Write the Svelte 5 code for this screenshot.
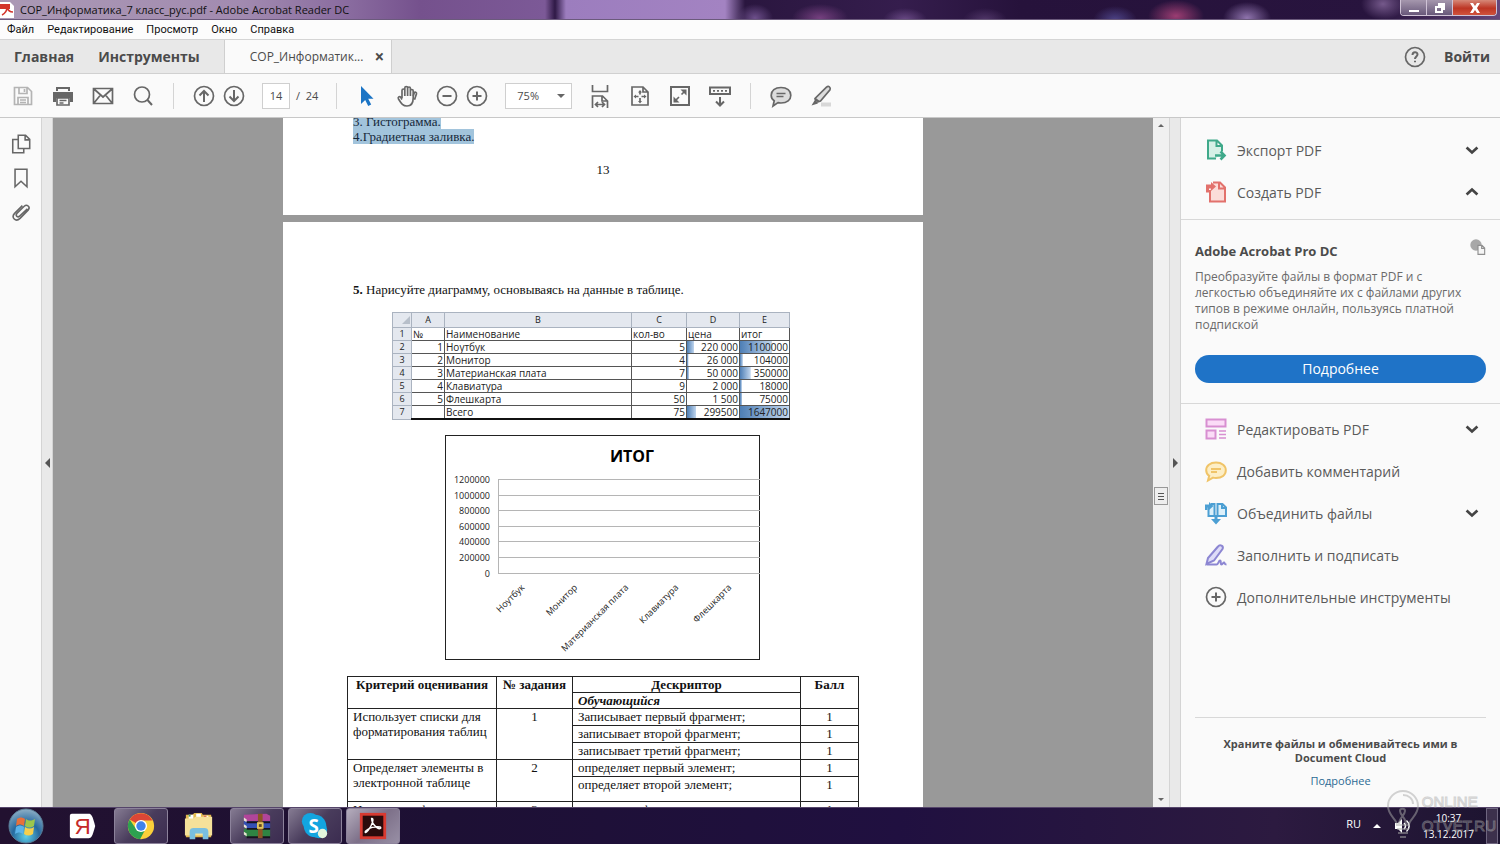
<script>
  const menu = ['Файл', 'Редактирование', 'Просмотр', 'Окно', 'Справка'];

  let page = $state('14');
  let zoom = $state('75%');

  const topTools = [
    { icon: 'export', label: 'Экспорт PDF', arrow: 'down' },
    { icon: 'create', label: 'Создать PDF', arrow: 'up' }
  ];

  const tools = [
    { icon: 'edit', label: 'Редактировать PDF', arrow: 'down' },
    { icon: 'note', label: 'Добавить комментарий' },
    { icon: 'combine', label: 'Объединить файлы', arrow: 'down' },
    { icon: 'sign', label: 'Заполнить и подписать' },
    { icon: 'more', label: 'Дополнительные инструменты' }
  ];

  // price and total cells carry a data bar, width in percent
  const sheet = [
    { n: '1', name: 'Ноутбук', qty: '5', price: '220 000', total: '1100000', bar: 14, totalBar: 66 },
    { n: '2', name: 'Монитор', qty: '4', price: '26 000', total: '104000', bar: 3, totalBar: 6 },
    { n: '3', name: 'Материанская плата', qty: '7', price: '50 000', total: '350000', bar: 4, totalBar: 22 },
    { n: '4', name: 'Клавиатура', qty: '9', price: '2 000', total: '18000', bar: 0, totalBar: 4 },
    { n: '5', name: 'Флешкарта', qty: '50', price: '1 500', total: '75000', bar: 0, totalBar: 5 },
    { n: '', name: 'Всего', qty: '75', price: '299500', total: '1647000', bar: 18, totalBar: 100 }
  ];

  const axis = ['1200000', '1000000', '800000', '600000', '400000', '200000', '0'];
  const categories = [
    { x: 80, name: 'Ноутбук' },
    { x: 133, name: 'Монитор' },
    { x: 184, name: 'Материанская плата' },
    { x: 234, name: 'Клавиатура' },
    { x: 287, name: 'Флешкарта' }
  ];

  const rubric = [
    { title: 'Использует списки для форматирования таблиц', n: 1, items: ['Записывает первый фрагмент;', 'записывает второй фрагмент;', 'записывает третий фрагмент;'] },
    { title: 'Определяет элементы в электронной таблице', n: 2, items: ['определяет первый элемент;', 'определяет второй элемент;'] },
    { title: 'Использует формулы', n: 3, items: ['использует формулы;'] }
  ];

  const apps = [
    { name: 'yandex', label: 'Яндекс', open: false },
    { name: 'chrome', label: 'Google Chrome', open: true },
    { name: 'folder', label: 'Проводник', open: false },
    { name: 'winrar', label: 'WinRAR', open: true },
    { name: 'skype', label: 'Skype', open: true },
    { name: 'acrobat', label: 'Adobe Acrobat Reader DC', open: true, active: true }
  ];
</script>

{#snippet icon(name)}
  <svg class="icon" viewBox="0 0 24 24" aria-hidden="true">
    {#if name === 'save'}
      <path class="pale" d="M3.500 3.500h13l4 4v13h-17zM8 3.500v6h8v-6M13.500 5v3M7 20.500v-7h10v7M9 16h6M9 18.500h6" />
    {:else if name === 'print'}
      <path class="solid" d="M5 3h14v4h-14zM2 8h20v10h-3v-4h-14v4h-3z" />
      <path d="M6 14h12v7h-12zM8.500 16.500h7M8.500 19h4" />
      <path class="white" d="M7 5h10v3h-10z" />
    {:else if name === 'mail'}
      <path d="M2.500 4.500h19v15h-19zM3 5l9 8 9-8M3 19l6.500-8M21 19l-6.500-8" />
    {:else if name === 'search'}
      <circle cx="11" cy="10.500" r="7.500" /><path class="thick" d="M16.500 16l4.500 5" />
    {:else if name === 'up'}
      <circle cx="12" cy="12" r="9.500" /><path class="thick" d="M12 18V7M7.500 11.500L12 7l4.500 4.500" />
    {:else if name === 'down'}
      <circle cx="12" cy="12" r="9.500" /><path class="thick" d="M12 6v11M7.500 12.500L12 17l4.500-4.500" />
    {:else if name === 'cursor'}
      <path class="blue" d="M6 2v18l4.200-4 3 6 3-1.500-3-5.700h5.300z" />
    {:else if name === 'hand'}
      <path d="M7 14V6.500c0-2 2.800-2 2.800 0V12V4c0-2 2.800-2 2.800 0v8V4.500c0-2 2.800-2 2.800 0V12V7c0-2 2.800-2 2.800 0v7c0 5-2 8-6.200 8-4 0-5.500-2-8.500-7-1-2 1-3.200 2.300-1.700L7 15.500" />
      <path d="M18.200 12l1-3c.7-1.500 2.600-.8 2.300.8l-2 6" />
    {:else if name === 'minus'}
      <circle cx="12" cy="12" r="9.500" /><path class="thick" d="M7.500 12h9" />
    {:else if name === 'plus' || name === 'more'}
      <circle cx="12" cy="12" r="9.500" /><path class="thick" d="M7.500 12h9M12 7.500v9" />
    {:else if name === 'width'}
      <path d="M4.500 1v6.500h15V1M4.500 24V12h10l5 5v7M14 12.500V17h5" /><path d="M8 20.500h8M10 18l-2.500 2.500L10 23M14 18l2.500 2.500L14 23" />
    {:else if name === 'fit'}
      <path d="M4 3h11l5 5v13H4zM15 3v5h5" /><path d="M12 8v2.500M12 14v3M7.500 12.500h3M13.500 12.500h3" />
      <path class="solid" d="M12 6l2 2.500h-4zM12 19.500l2-2.500h-4zM5.500 12.500l2.500-2v4zM18.500 12.500l-2.500-2v4z" />
    {:else if name === 'full'}
      <path class="thick" d="M3 3h18v18H3z" /><path d="M7 17l4-4M13.500 10.500l4-4" />
      <path class="solid" d="M18.500 5.500v6l-6-6zM5.500 18.500v-6l6 6z" />
    {:else if name === 'keys'}
      <path class="thick" d="M2 3.500h20v6.500H2zM12 13v8M8 17.500l4 4 4-4" /><path d="M5 6.800h2M9 6.800h2M13 6.800h2M17 6.800h2" />
    {:else if name === 'comment'}
      <path class="tint" d="M12 3.500c6 0 9.800 3.200 9.800 7.800S18 19 12 19c-1 0-2 0-3-.4L4 22l1.200-5.200C3 15.500 2.200 13.500 2.200 11.300 2.200 6.700 6 3.500 12 3.500z" />
      <path d="M7.500 9.500h9M7.500 12.500h7" />
    {:else if name === 'marker'}
      <path class="under" d="M12 20.500h10" />
      <path class="tint" d="M17.500 3.200c2-1.700 4.500 0 3.500 2.500L11.500 17l-4.500 1.500-1-4zM6 14.500L10.500 18" /><path class="solid" d="M5.500 16.500l3.500 3-6.500 2z" />
    {:else if name === 'help'}
      <circle cx="12" cy="12" r="9.500" /><path class="thick" d="M9.500 10c0-3.500 5-3.500 5-.5 0 2-2.500 2-2.500 4.500M12 15.800v1.500" />
    {:else if name === 'pages'}
      <path d="M9 2.500h8l4.500 4.500v10H9zM16.500 3v4.500h5M9 7H3v14.500h12V17" />
    {:else if name === 'bookmark'}
      <path d="M5.500 2.500h13v19l-6.500-6-6.500 6z" />
    {:else if name === 'clip'}
      <path d="M19 8.500l-8.500 8c-2 2-5-.5-3-2.800l8-8c3-2.700 7 .8 4.500 4L11 19c-5 4.500-10-.8-6-5.500l8.500-8.500" />
    {:else if name === 'export'}
      <path class="green" d="M12 20.500H4V2.500h9l5 5v6M12.500 3v5h5" /><path class="green thick" d="M11 17.500h9M16.500 13.500l4 4-4 4" />
    {:else if name === 'create'}
      <path class="red" d="M6 10v11.500h15V7.500l-5-5H9M15 3v5.500h6" /><path class="redfill" d="M2 4.500h5V2l5 4.500L7 11V8.500H5v4H2z" />
    {:else if name === 'edit'}
      <path class="pink" d="M2.500 2.500h19v7h-19zM2.500 13.500h9v8h-9z" /><path class="pinkline" d="M15 14h7M15 17.500h7M15 21h7" />
    {:else if name === 'note'}
      <path class="yellow" d="M12 3.500c6 0 9.800 3.200 9.800 7.800S18 19 12 19c-1 0-2 0-3-.4L4 21.500l1.200-4.700C3 15.500 2.200 13.500 2.200 11.300 2.200 6.700 6 3.500 12 3.500zM7 10h10M7 13h6" />
    {:else if name === 'combine'}
      <path class="sky" d="M4.500 6v9h6V3H7M13.500 3h5l3.500 3.500V15h-8.500zM18 3v4h4" />
      <path class="skyfill" d="M1 3.500h4V1l4.500 4L5 9V6.500H3.500V9H1zM10.500 14h3v4H17l-5 5.500L7 18h3.500z" />
    {:else if name === 'sign'}
      <path class="violet" d="M14 3.500c2-2.500 6-.5 4.500 2.500L10 17.500 2.500 21l1.500-6z" />
      <path class="violet open-line" d="M2.500 21.500h10c2 0 2-4 3.500-4s0 4 1.500 4 1.500-2 2.500-2 0 2 2.500 2" />
    {:else if name === 'cloudpage'}
      <circle class="cloud" cx="9" cy="9" r="8.500" />
      <path class="sheet" d="M12 9.500h6l4 4V23H12zM17.500 10v4H22" />
    {:else if name === 'chevdown'}
      <path class="chev" d="M5.500 9l6.500 6 6.500-6" />
    {:else if name === 'chevup'}
      <path class="chev" d="M5.500 15l6.500-6 6.500 6" />
    {/if}
  </svg>
{/snippet}

{#snippet tool(t)}
  <button class="tool">
    {@render icon(t.icon)}
    <span>{t.label}</span>
    {#if t.arrow}{@render icon('chev' + t.arrow)}{/if}
  </button>
{/snippet}

{#snippet appIcon(name)}
  <svg class="app-icon" viewBox="0 0 32 32" aria-hidden="true">
    {#if name === 'yandex'}
      <path fill="#fff" d="M4 3h18c3 0 4 2 7 13-3 11-4 13-7 13H4c-1 0-2-1-2-2V5c0-1 1-2 2-2z" />
      <text class="ya" x="7" y="25">Я</text>
    {:else if name === 'chrome'}
      <circle cx="16" cy="16" r="14" fill="#fbd03a" />
      <path fill="#dc4636" d="M16 16L4 9a14 14 0 0 1 24.300 1H16z" />
      <path fill="#2da150" d="M3.900 9A14 14 0 0 0 15 30l6-11-5-3-6 2z" />
      <circle cx="16" cy="16" r="6.500" fill="#fff" /><circle cx="16" cy="16" r="5" fill="#3f83ea" />
    {:else if name === 'folder'}
      <path fill="#e2b94e" d="M2 4h7l2-2h8l1 2h9v24H2z" />
      <path fill="#fff" d="M5 4h5v5H5zM13 3h5v5h-5zM21 5h5v5h-5z" />
      <path fill="#3f9c62" d="M5 4h2v2H5z" /><path fill="#d65142" d="M21 5h3v2h-3z" />
      <path fill="#f5e19a" d="M1 8h9l2-2h18v20H1z" />
      <path fill="#79bfe0" d="M6 30v-8c0-3 2-4 4-4h12c2 0 4 1 4 4v8h-6v-6h-8v6z" />
    {:else if name === 'winrar'}
      <path fill="#b1459a" d="M2 4l24-1 4 2v7H5L2 10z" /><path fill="#3450b4" d="M2 11h28v8H5l-3-3z" /><path fill="#2f8443" d="M2 19h28v9H5l-3-3z" />
      <path fill="#e8e3d4" d="M2 7l3 2v3l-3-2zM2 14l3 2v3l-3-2zM2 22l3 2v3l-3-2z" />
      <path fill="#18131f" d="M5 11h25v2H5zM5 18h25v2H5zM5 27h25v2H5z" />
      <path fill="#8b5525" d="M17 3h5v26h-5z" /><path fill="#e0c45c" d="M16 12h7v7h-7z" /><path fill="#5f4422" d="M18 14h3v3h-3z" />
    {:else if name === 'skype'}
      <circle cx="11" cy="11" r="9" fill="#12a5e0" /><circle cx="20" cy="20" r="9" fill="#12a5e0" /><circle cx="16" cy="16" r="12" fill="#12a5e0" />
      <text class="sk" x="9" y="23">S</text>
      <circle cx="24" cy="24" r="5" fill="#e4f6dd" />
    {:else if name === 'acrobat'}
      <path fill="#d83a31" d="M2 2h28v28H2z" /><path fill="#2b0b0c" d="M5 5h22v22H5z" />
      <path class="swirl" d="M14.500 8c3-1 1 7-4 13-2 3-4 2-2 0 3-3 10-5 15-4 2 1 0 3-3 1-4-3-6-7-6-10z" />
    {/if}
  </svg>
{/snippet}

<div class="window">
  <header class="titlebar">
    <svg class="pdf" viewBox="0 0 14 16" aria-hidden="true">
      <path fill="#fff" d="M0 0h10l4 4v12H0z" /><path fill="#d3342b" d="M0 2h10v5H0z" />
      <path fill="none" stroke="#d3342b" stroke-width="1.500" d="M2 13c4-2 5-6 5-8 1 4 3 5 6 5" />
    </svg>
    <h1>СОР_Информатика_7 класс_рус.pdf - Adobe Acrobat Reader DC</h1>
    <div class="controls">
      <button aria-label="Свернуть"><svg viewBox="0 0 12 10"><path d="M1 7h10v2H1z" /></svg></button>
      <button aria-label="Восстановить"><svg viewBox="0 0 12 10"><path fill-rule="evenodd" d="M4 0h7v7H9v3H1V3h3zM3 5v3h4V5z" /></svg></button>
      <button class="close" aria-label="Закрыть"><svg viewBox="0 0 12 10"><path d="M1 0h3l2 3 2-3h3L8 5l3 5H8L6 7l-2 3H1l3-5z" /></svg></button>
    </div>
  </header>

  <nav class="menubar">
    {#each menu as item}
      <button>{item}</button>
    {/each}
  </nav>

  <div class="tabs">
    <button class="home">Главная</button>
    <button class="instruments">Инструменты</button>
    <div class="tab">
      <button>СОР_Информатик...</button>
      <button class="tab-close" aria-label="Закрыть вкладку">×</button>
    </div>
    <div class="account">
      <button class="tb" aria-label="Справка">{@render icon('help')}</button>
      <button>Войти</button>
    </div>
  </div>

  <div class="toolbar">
    <div class="group wide">
      <button class="tb" aria-label="Сохранить">{@render icon('save')}</button>
      <button class="tb" aria-label="Печать">{@render icon('print')}</button>
      <button class="tb" aria-label="Почта">{@render icon('mail')}</button>
      <button class="tb" aria-label="Поиск">{@render icon('search')}</button>
    </div>
    <i class="sep"></i>
    <div class="group">
      <button class="tb" aria-label="Предыдущая страница">{@render icon('up')}</button>
      <button class="tb" aria-label="Следующая страница">{@render icon('down')}</button>
    </div>
    <label class="pager"><input bind:value={page} aria-label="Страница" /> <span>/&nbsp; 24</span></label>
    <i class="sep"></i>
    <div class="group wide">
      <button class="tb" aria-label="Выделение">{@render icon('cursor')}</button>
      <button class="tb" aria-label="Рука">{@render icon('hand')}</button>
      <div class="group">
        <button class="tb" aria-label="Уменьшить">{@render icon('minus')}</button>
        <button class="tb" aria-label="Увеличить">{@render icon('plus')}</button>
      </div>
    </div>
    <div class="zoom">
      <select bind:value={zoom} aria-label="Масштаб">
        <option>50%</option>
        <option>75%</option>
        <option>100%</option>
      </select>
      <i class="tri down"></i>
    </div>
    <div class="group wide">
      <button class="tb" aria-label="По ширине">{@render icon('width')}</button>
      <button class="tb" aria-label="Страница целиком">{@render icon('fit')}</button>
      <button class="tb" aria-label="Полный экран">{@render icon('full')}</button>
      <button class="tb" aria-label="Панель">{@render icon('keys')}</button>
    </div>
    <i class="sep"></i>
    <div class="group wide">
      <button class="tb" aria-label="Комментарий">{@render icon('comment')}</button>
      <button class="tb" aria-label="Маркер">{@render icon('marker')}</button>
    </div>
  </div>

  <div class="body">
    <aside class="rail">
      <button class="tb" aria-label="Миниатюры">{@render icon('pages')}</button>
      <button class="tb" aria-label="Закладки">{@render icon('bookmark')}</button>
      <button class="tb" aria-label="Вложения">{@render icon('clip')}</button>
    </aside>
    <button class="strip" aria-label="Левая панель"><i class="tri left"></i></button>

    <main class="doc">
      <section class="sheet-page prev">
        <p><mark>3. Гистограмма.</mark></p>
        <p><mark>4.Градиетная заливка.</mark></p>
        <p class="num">13</p>
      </section>

      <section class="sheet-page next">
        <p class="task"><b>5.</b> Нарисуйте диаграмму, основываясь на данные в таблице.</p>

        <table class="excel">
          <colgroup><col class="c0" /><col class="cA" /><col class="cB" /><col class="cC" /><col class="cD" /><col class="cE" /></colgroup>
          <thead>
            <tr><th class="corner"><i></i></th><th>A</th><th>B</th><th>C</th><th>D</th><th>E</th></tr>
          </thead>
          <tbody>
            <tr><th>1</th><td>№</td><td>Наименование</td><td>кол-во</td><td>цена</td><td>итог</td></tr>
            {#each sheet as row, i}
              <tr>
                <th>{i + 2}</th>
                <td class="r">{row.n}</td>
                <td>{row.name}</td>
                <td class="r">{row.qty}</td>
                <td class="r bar" style="--w: {row.bar}%">{row.price}</td>
                <td class="r bar" style="--w: {row.totalBar}%">{row.total}</td>
              </tr>
            {/each}
          </tbody>
        </table>

        <svg class="chart" viewBox="0 0 316 226" role="img" aria-label="Итог">
          <rect class="frame" x="0.500" y="0.500" width="314" height="224" />
          <text class="chart-title" x="187" y="27">ИТОГ</text>
          {#each axis as label, i}
            <text class="axis" x="45" y={48 + i * 15.6}>{label}</text>
            <path class="grid" d="M53 {Math.round(44 + i * 15.6) + 0.5}H315" />
          {/each}
          <path class="grid" d="M53.500 44v94" />
          {#each categories as c}
            <text class="cat" transform="translate({c.x} 153) rotate(-45)">{c.name}</text>
          {/each}
        </svg>

        <table class="rubric">
          <colgroup><col class="r1" /><col class="r2" /><col class="r3" /><col class="r4" /></colgroup>
          <thead>
            <tr><th rowspan="2">Критерий оценивания</th><th rowspan="2">№ задания</th><th>Дескриптор</th><th rowspan="2">Балл</th></tr>
            <tr><th class="sub">Обучающийся</th></tr>
          </thead>
          <tbody>
            {#each rubric as group}
              {#each group.items as item, i}
                <tr class:last={i === 1 && group.items.length === 2}>
                  {#if i === 0}
                    <td rowspan={group.items.length}>{group.title}</td>
                    <td class="mid" rowspan={group.items.length}>{group.n}</td>
                  {/if}
                  <td>{item}</td>
                  <td class="mid">1</td>
                </tr>
              {/each}
            {/each}
          </tbody>
        </table>
      </section>
    </main>

    <div class="scroll">
      <i class="tri up small"></i>
      <div class="thumb"><i></i></div>
      <i class="tri down small"></i>
    </div>
    <button class="strip" aria-label="Правая панель"><i class="tri right"></i></button>

    <aside class="panel">
      <div class="tool-list top">
        {#each topTools as t}{@render tool(t)}{/each}
      </div>
      <section class="promo">
        <div class="promo-head">
          <h2>Adobe Acrobat Pro DC</h2>
          {@render icon('cloudpage')}
        </div>
        <p>Преобразуйте файлы в формат PDF и с легкостью объединяйте их с файлами других типов в режиме онлайн, пользуясь платной подпиской</p>
        <button class="primary">Подробнее</button>
      </section>
      <div class="tool-list">
        {#each tools as t}{@render tool(t)}{/each}
      </div>
      <footer>
        <strong>Храните файлы и обменивайтесь ими в Document Cloud</strong>
        <a href="#cloud">Подробнее</a>
      </footer>
    </aside>
  </div>

  <div class="taskbar">
    <button class="start" aria-label="Пуск">
      <svg viewBox="0 0 36 36" aria-hidden="true">
        <defs>
          <radialGradient id="orb" cx="50%" cy="80%" r="80%">
            <stop offset="0" stop-color="#5fd0e8" /><stop offset="0.500" stop-color="#26699f" /><stop offset="1" stop-color="#8fb0c6" />
          </radialGradient>
        </defs>
        <circle cx="18" cy="18" r="17" fill="url(#orb)" stroke="#5a7d96" />
        <path fill="#e8703a" d="M9 11c3-2 5-2 8 0l-1 7c-3-2-5-2-8 0z" /><path fill="#9cc64c" d="M18 11c3 2 5 2 9 0l-1 7c-3 2-6 2-9 0z" />
        <path fill="#5cb3ea" d="M8 19c3-2 5-2 8 0l-1 7c-3-2-5-2-8 0z" /><path fill="#f6cf4c" d="M17 19c3 2 6 2 9 0l-1 7c-3 2-6 2-9 0z" />
      </svg>
    </button>
    {#each apps as app}
      <button class="app" class:open={app.open} class:active={app.active} aria-label={app.label}>{@render appIcon(app.name)}</button>
    {/each}
    <div class="tray">
      <span class="lang">RU</span>
      <i class="tri up white"></i>
      <svg class="speaker" viewBox="0 0 18 18" aria-hidden="true">
        <path fill="#fff" d="M2 6h3l4-4v14l-4-4H2z" /><path fill="none" stroke="#fff" stroke-width="1.500" d="M11 6c2 2 2 4 0 6M13.500 3.500c3.500 3 3.500 8 0 11" />
      </svg>
      <div class="clock"><span>10:37</span><span>13.12.2017</span></div>
      <button class="desk" aria-label="Показать рабочий стол"></button>
    </div>
  </div>

  <div class="watermark">
    <svg viewBox="0 0 34 50" aria-hidden="true">
      <path d="M11 36c0-6-9-9-9-19a15 15 0 0 1 30 0c0 10-9 13-9 19zM11 40h12M12 44h10M14 48h6M13 35c0-6 6-9 6-13 0-3-5-3-5 0 0 4 6 7 6 13M17 6c6 0 10 4 10 9" />
    </svg>
    <div><span>ONLINE</span><span>OTVET.RU</span></div>
  </div>
</div>

<style>
  :global(body) {
    margin: 0;
    overflow: hidden;
  }
  .window {
    position: relative;
    display: flex;
    flex-direction: column;
    height: 100vh;
    background: #fafafa;
    color: #4b4b4b;
    font-family: 'Open Sans', 'Noto Sans', sans-serif;
    font-size: 12px;
  }
  button {
    padding: 0;
    border: 0;
    background: none;
    color: inherit;
    font: inherit;
  }
  p, h1, h2 {
    margin: 0;
  }

  .titlebar {
    display: flex;
    align-items: center;
    flex: none;
    gap: 6px;
    height: 20px;
    box-sizing: border-box;
    border-bottom: 1px solid #6b5a7c;
    background:
      radial-gradient(ellipse 18px 14px at 755px 18px, #6d4f8b, transparent),
      radial-gradient(ellipse 28px 14px at 820px 18px, #75407f, transparent),
      radial-gradient(ellipse 22px 12px at 905px 20px, #6a4a86, transparent),
      radial-gradient(ellipse 22px 12px at 985px 20px, #503668, transparent),
      radial-gradient(ellipse 22px 14px at 1115px 20px, #4d4387, transparent),
      radial-gradient(ellipse 28px 16px at 1176px 16px, #9b3d72, transparent),
      radial-gradient(ellipse 24px 16px at 1247px 18px, #8f74ad, transparent),
      radial-gradient(ellipse 22px 16px at 1383px 4px, #75598b, transparent),
      linear-gradient(90deg, #ab99b5, #a28bb0 240px, #896b9f 350px, #75518d 420px, #7c5997 545px, #2f1946 555px, #9c7dbe 566px, #a383c2 725px, #2a163f 745px, #351d4d 900px, #26123b 1020px, #28143e 1380px, #65477b);
  }
  .titlebar h1 {
    flex: 1;
    color: #111;
    font-size: 11px;
    font-weight: 400;
    line-height: 18px;
  }
  .pdf {
    width: 14px;
    height: 16px;
  }
  .controls {
    display: flex;
    align-self: flex-start;
    margin-right: 3px;
    border: 1px solid #cfc3d6;
    border-top: 0;
    border-radius: 0 0 4px 4px;
    overflow: hidden;
  }
  .controls button {
    width: 26px;
    height: 15px;
    border-right: 1px solid #cfc3d6;
    background: linear-gradient(#a597ad, #68587a);
    line-height: 0;
  }
  .controls .close {
    width: 43px;
    border: 0;
    background: linear-gradient(#d68878, #bd3524 55%, #d0533c);
  }
  .controls svg {
    width: 12px;
    height: 10px;
    fill: #fff;
  }

  .menubar {
    display: flex;
    align-items: center;
    flex: none;
    gap: 13px;
    height: 19px;
    padding-left: 7px;
    border-bottom: 1px solid #d5d5d5;
    background: #fcfcfc;
    color: #111;
    font-family: Roboto, 'Open Sans', sans-serif;
    font-size: 11px;
  }

  .tabs {
    display: flex;
    flex: none;
    height: 33px;
    padding-left: 14px;
    background: #e8e8e8;
    font-size: 14px;
    font-weight: 700;
  }
  .home, .instruments {
    margin-right: 24px;
  }
  .tab {
    display: flex;
    align-items: center;
    gap: 11px;
    padding: 0 7px 0 25px;
    border: 1px solid #cfcfcf;
    border-width: 0 1px;
    background: #fafafa;
    font-size: 12px;
    font-weight: 400;
  }
  .tab-close {
    font-size: 17px;
    font-weight: 700;
  }
  .account {
    display: flex;
    align-items: center;
    gap: 17px;
    margin-left: auto;
    padding-right: 10px;
  }

  .toolbar {
    display: flex;
    align-items: center;
    flex: none;
    height: 43px;
    padding-left: 11px;
    border-top: 1px solid #d0d0d0;
    border-bottom: 1px solid #c8c8c8;
  }
  .group {
    display: flex;
    align-items: center;
    gap: 6px;
  }
  .group.wide {
    gap: 16px;
  }
  .sep {
    width: 1px;
    height: 26px;
    margin: 0 18px;
    background: #d4d4d4;
  }
  .tb {
    width: 24px;
    height: 24px;
    line-height: 0;
  }
  .pager {
    display: flex;
    align-items: center;
    gap: 6px;
    margin-left: 16px;
  }
  .pager input {
    width: 28px;
    height: 26px;
    padding: 0;
    border: 1px solid #cfcfcf;
    box-sizing: border-box;
    background: #fff;
    color: inherit;
    font: inherit;
    font-size: 11px;
    text-align: center;
  }
  .pager span {
    font-size: 11px;
  }
  .zoom {
    position: relative;
    margin: 0 16px;
  }
  .zoom select {
    width: 67px;
    height: 26px;
    padding: 0 11px;
    border: 1px solid #cfcfcf;
    border-radius: 0;
    appearance: none;
    background: #fff;
    color: inherit;
    font: inherit;
    font-size: 11px;
  }
  .zoom .tri {
    position: absolute;
    top: 11px;
    right: 7px;
    pointer-events: none;
  }
  .tri {
    width: 0;
    height: 0;
    border: 4px solid transparent;
  }
  .tri.down {
    border-top-color: #666;
    border-bottom: 0;
  }
  .tri.up {
    border-bottom-color: #666;
    border-top: 0;
  }
  .tri.left {
    border-width: 5px;
    border-right-color: #555;
    border-left: 0;
  }
  .tri.right {
    border-width: 5px;
    border-left-color: #555;
    border-right: 0;
  }
  .tri.small {
    border-width: 3px;
  }
  .tri.white {
    border-bottom-color: #fff;
  }

  .icon {
    width: 24px;
    height: 24px;
    fill: none;
    stroke: #676767;
    stroke-width: 1.7;
  }
  .icon .pale { stroke: #b4b4b4; }
  .icon .thick { stroke-width: 2; }
  .icon .solid { fill: #676767; stroke: none; }
  .icon .white { fill: #fafafa; stroke: none; }
  .icon .blue { fill: #1b74c5; stroke: none; }
  .icon .tint { fill: #dcdcdc; }
  .icon .under { stroke: #d8d8d8; stroke-width: 4; }
  .icon .green { fill: #d5f0e6; stroke: #3fa98a; stroke-width: 2; }
  .icon .green.thick { fill: none; stroke-width: 2.6; }
  .icon .red { fill: #fbdcd9; stroke: #e2716c; stroke-width: 2; }
  .icon .redfill { fill: #e2716c; stroke: none; }
  .icon .pink { fill: #fbdcf7; stroke: #d88fd1; stroke-width: 2; }
  .icon .pinkline { stroke: #d88fd1; stroke-width: 1.4; }
  .icon .yellow { fill: #fdeec5; stroke: #f0c468; stroke-width: 2; }
  .icon .sky { fill: #dcf0fa; stroke: #4c9fd3; stroke-width: 2; }
  .icon .skyfill { fill: #4c9fd3; stroke: none; }
  .icon .violet { fill: #dedcf8; stroke: #8c86d2; stroke-width: 2; }
  .icon .open-line { fill: none; }
  .icon .cloud { fill: #a8a8a8; stroke: none; }
  .icon .sheet { fill: #f5f5f5; stroke: #8f8f8f; }
  .icon .chev { stroke: #444; stroke-width: 3.2; }

  .body {
    display: flex;
    flex: 1;
    min-height: 0;
  }
  .rail {
    display: flex;
    flex-direction: column;
    align-items: center;
    gap: 10px;
    width: 41px;
    padding-top: 14px;
  }
  .rail .icon {
    width: 22px;
    height: 22px;
  }
  .strip {
    display: flex;
    align-items: center;
    justify-content: center;
    width: 12px;
    border: 1px solid #d4d4d4;
    border-width: 0 1px;
    box-sizing: border-box;
    background: #e9e9e9;
  }

  .doc {
    display: flex;
    flex: 1;
    flex-direction: column;
    align-items: center;
    gap: 7px;
    overflow: hidden;
    background: #999;
    color: #111;
    font-family: 'Liberation Serif', 'Times New Roman', serif;
    font-size: 13px;
    line-height: 15px;
  }
  .sheet-page {
    flex: none;
    width: 640px;
    box-sizing: border-box;
    padding: 0 64px 0 70px;
    background: #fff;
  }
  .prev {
    display: flex;
    flex-direction: column;
    justify-content: flex-end;
    height: 97px;
    padding-bottom: 38px;
    overflow: hidden;
  }
  .prev mark {
    background: #a2c4dc;
    color: #16283a;
  }
  .num {
    margin-top: 18px;
    padding-right: 6px;
    text-align: center;
  }
  .next {
    padding-top: 60px;
  }

  .excel {
    width: 398px;
    margin: 15px 0 0 39px;
    border-collapse: collapse;
    table-layout: fixed;
    color: #222;
    font-family: 'Open Sans', 'Noto Sans', sans-serif;
    font-size: 10px;
    line-height: 12px;
  }
  .c0 { width: 19px; }
  .cA { width: 33px; }
  .cB { width: 187px; }
  .cC { width: 55px; }
  .cD { width: 53px; }
  .excel th, .excel td {
    height: 12px;
    padding: 0 1px;
    border: 1px solid #555;
    overflow: hidden;
    text-align: left;
    white-space: nowrap;
  }
  .excel th {
    border-color: #aab3c0;
    background: #e4e8ef;
    font-size: 9px;
    font-weight: 400;
    text-align: center;
  }
  .excel thead th {
    height: 14px;
  }
  .excel tr:last-child td {
    border-bottom: 2px solid #111;
  }
  .corner i {
    display: block;
    width: 0;
    height: 0;
    margin-left: auto;
    border: 4px solid #b7bfca;
    border-top-color: transparent;
    border-left-color: transparent;
  }
  .excel .r {
    text-align: right;
  }
  .excel .bar {
    background: linear-gradient(90deg, #4d7eb5, #c5d9f0) no-repeat;
    background-size: var(--w) 100%;
  }

  .chart {
    display: block;
    width: 316px;
    height: 226px;
    margin: 15px 0 15px 92px;
    font-family: 'Open Sans', 'Noto Sans', sans-serif;
  }
  .frame {
    fill: #fff;
    stroke: #222;
  }
  .chart-title {
    font-size: 16px;
    font-weight: 700;
    text-anchor: middle;
  }
  .axis, .cat {
    fill: #222;
    font-size: 9px;
    text-anchor: end;
  }
  .grid {
    stroke: #b5b5b5;
  }

  .rubric {
    width: 512px;
    margin-left: -6px;
    border-collapse: collapse;
    table-layout: fixed;
  }
  .r1 { width: 149px; }
  .r2 { width: 76px; }
  .r3 { width: 228px; }
  .rubric th, .rubric td {
    height: 16px;
    padding: 0 5px;
    border: 1px solid #222;
    text-align: left;
    vertical-align: top;
  }
  .rubric thead th {
    padding: 0;
    height: 15px;
    text-align: center;
  }
  .rubric thead .sub {
    padding: 0 5px;
    font-style: italic;
    text-align: left;
  }
  .rubric .mid {
    text-align: center;
  }
  .rubric .last td {
    height: 24px;
  }

  .scroll {
    display: flex;
    flex-direction: column;
    align-items: center;
    width: 16px;
    padding: 6px 0;
    box-sizing: border-box;
    background: #f0f0f0;
  }
  .thumb {
    display: flex;
    align-items: center;
    justify-content: center;
    width: 12px;
    height: 16px;
    margin: auto;
    margin-top: 360px;
    border: 1px solid #999;
    background: #eee;
  }
  .thumb i {
    width: 6px;
    height: 7px;
    background: repeating-linear-gradient(#555 0 1px, transparent 1px 3px);
  }

  .panel {
    display: flex;
    flex-direction: column;
    width: 319px;
  }
  .tool-list {
    padding: 4px 18px 0 23px;
  }
  .tool-list.top {
    padding: 11px 18px 6px 23px;
    border-bottom: 1px solid #d8d8d8;
  }
  .tool {
    display: flex;
    align-items: center;
    gap: 9px;
    width: 100%;
    height: 42px;
    color: #5a5a5a;
    font-size: 14px;
    text-align: left;
  }
  .tool span {
    flex: 1;
  }
  .tool .icon:last-child {
    width: 20px;
    height: 20px;
  }
  .promo {
    padding: 19px 14px 20px;
    border-bottom: 1px solid #d8d8d8;
    color: #6a6a6a;
    line-height: 16px;
  }
  .promo-head {
    display: flex;
    justify-content: space-between;
  }
  .promo-head h2 {
    margin: 4px 0 10px;
    color: #4b4b4b;
    font-size: 13px;
    line-height: 16px;
  }
  .promo-head .icon {
    width: 16px;
    height: 16px;
  }
  .primary {
    width: 100%;
    height: 28px;
    margin-top: 22px;
    border-radius: 14px;
    background: #1f73c7;
    color: #fff;
    font-size: 14px;
  }
  .panel footer {
    display: flex;
    flex-direction: column;
    align-items: center;
    gap: 9px;
    margin: auto 14px 0;
    padding: 19px 16px;
    border-top: 1px solid #d8d8d8;
    font-size: 11px;
    line-height: 14px;
    text-align: center;
  }
  .panel a {
    color: #2b6a94;
    text-decoration: none;
  }

  .taskbar {
    display: flex;
    flex: none;
    gap: 4px;
    height: 37px;
    box-sizing: border-box;
    border-top: 1px solid #55456a;
    background: linear-gradient(90deg, #221130, #1d1034 30%, #201040 60%, #2c1a40 85%, #1d1430);
  }
  .start {
    width: 52px;
    line-height: 0;
  }
  .start svg {
    width: 36px;
    height: 36px;
  }
  .app {
    width: 54px;
    border: 1px solid transparent;
    border-radius: 3px;
    line-height: 0;
  }
  .app.open {
    border-color: #8c829b;
    background: linear-gradient(135deg, #857b92, #493c5c 50%, #3b2c50);
  }
  .app.active {
    background: linear-gradient(135deg, #b5adbd, #7d7089 50%, #988fa5);
  }
  .app-icon {
    width: 30px;
    height: 30px;
  }
  .ya {
    fill: #c52a2a;
    font-size: 24px;
    font-family: 'Liberation Sans', sans-serif;
  }
  .sk {
    fill: #fff;
    font-size: 20px;
    font-weight: 700;
  }
  .swirl {
    fill: none;
    stroke: #fff;
    stroke-width: 1.5;
  }
  .tray {
    display: flex;
    align-items: center;
    gap: 12px;
    margin-left: auto;
    color: #fff;
    font-size: 10px;
  }
  .lang {
    padding-bottom: 6px;
    font-size: 11px;
  }
  .speaker {
    width: 18px;
    height: 18px;
  }
  .clock {
    display: flex;
    flex-direction: column;
    align-items: center;
    line-height: 16px;
  }
  .desk {
    align-self: stretch;
    width: 12px;
    margin-right: 2px;
    border: 1px solid #6f6680;
    background: #3c304c;
  }

  /* site mark over the lower right corner */
  .watermark {
    position: absolute;
    right: 4px;
    bottom: 5px;
    display: flex;
    align-items: center;
    gap: 2px;
    opacity: 0.5;
    pointer-events: none;
  }
  .watermark svg {
    width: 34px;
    height: 50px;
    fill: none;
    stroke: #aaa;
    stroke-width: 2;
  }
  .watermark div {
    display: flex;
    flex-direction: column;
    color: transparent;
    font-family: 'Liberation Sans Narrow', 'Liberation Sans', sans-serif;
    font-size: 15px;
    line-height: 24px;
    -webkit-text-stroke: 1px #aaa;
  }
</style>
